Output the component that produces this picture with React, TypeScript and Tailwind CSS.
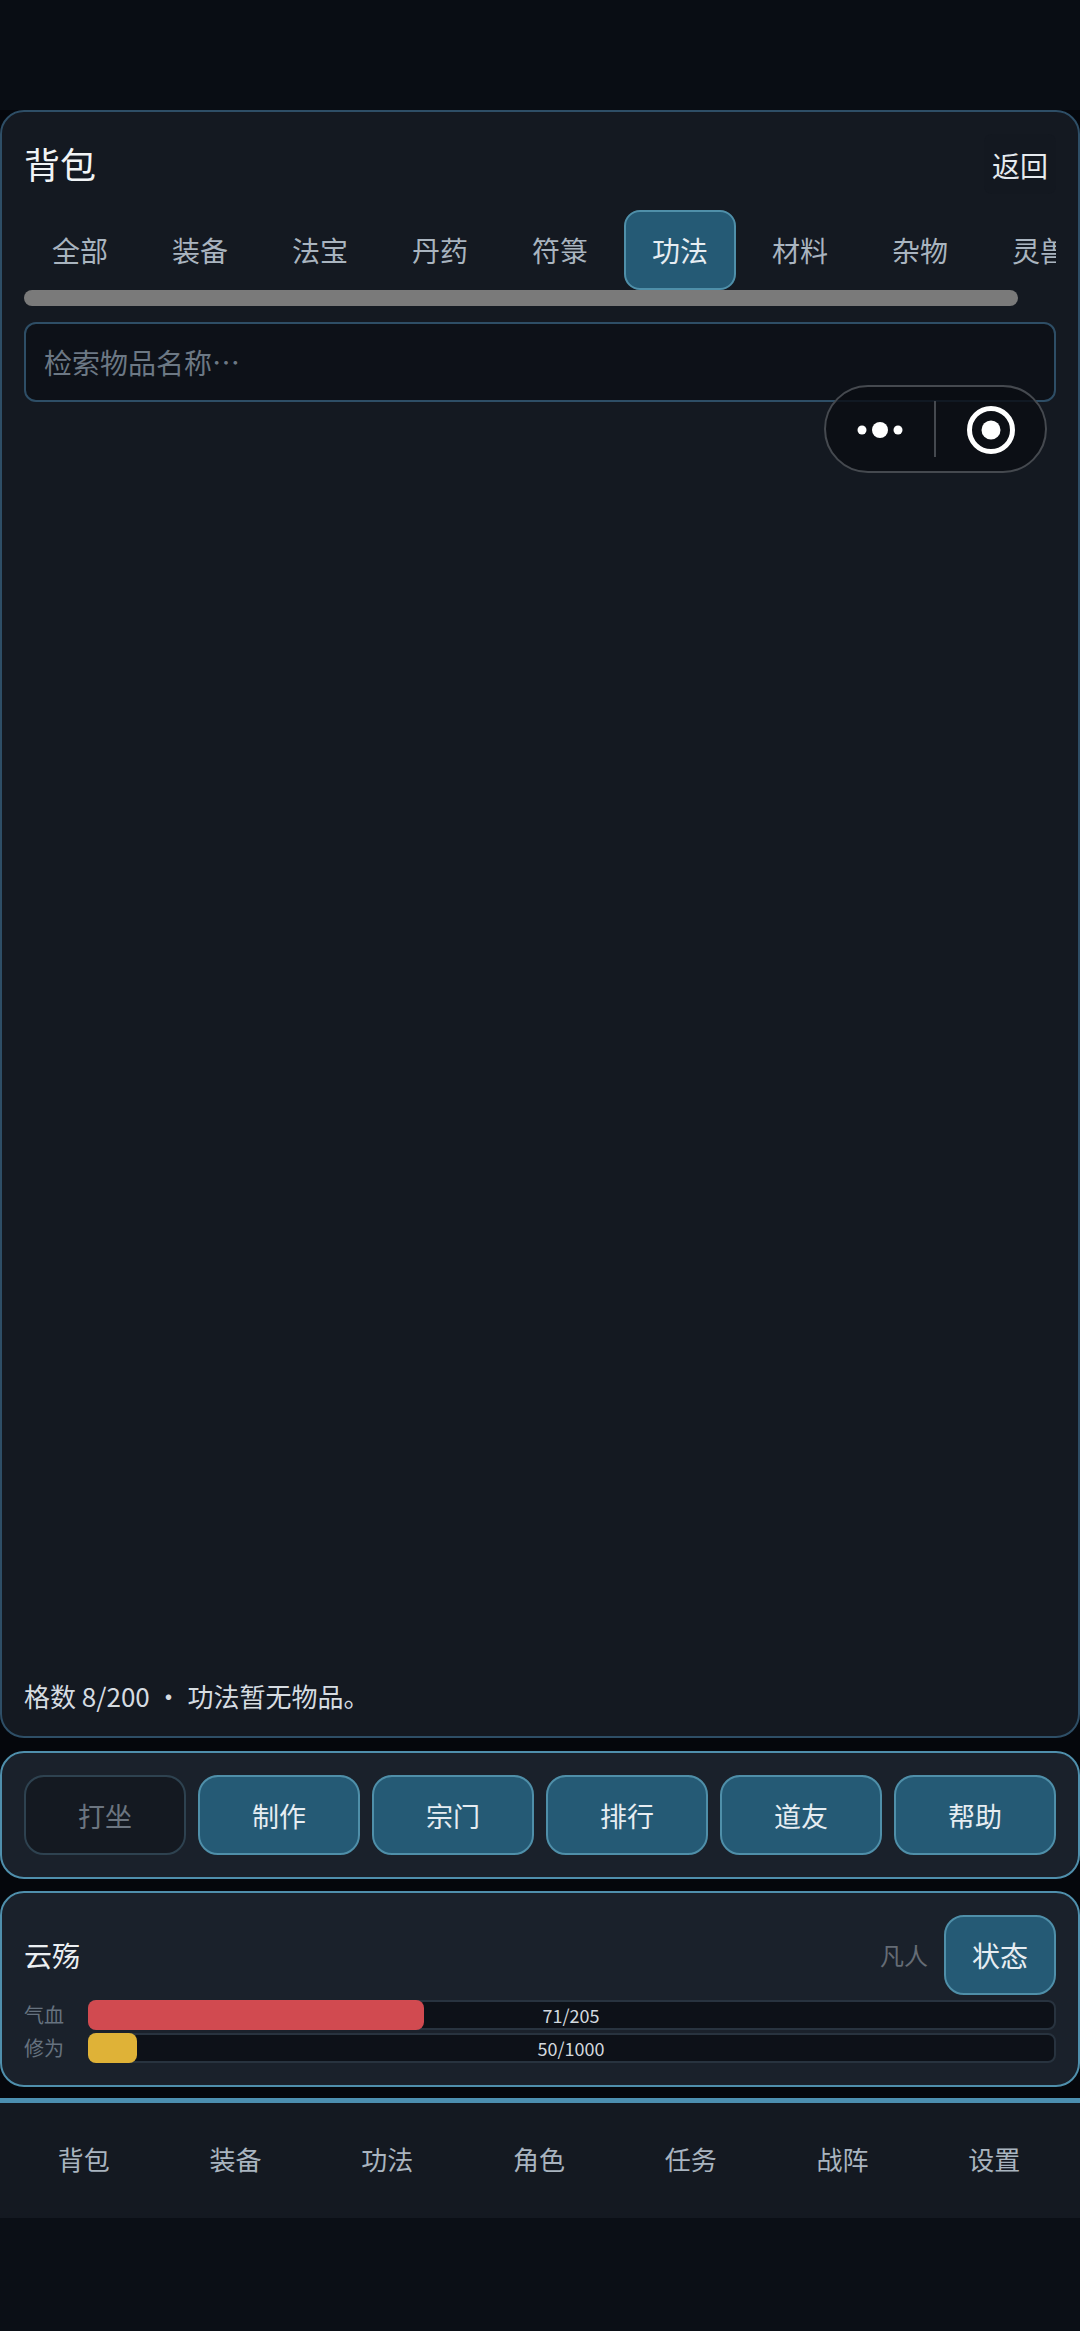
const TABS = ["全部", "装备", "法宝", "丹药", "符箓", "功法", "材料", "杂物", "灵兽"];
const ACTIONS = ["制作", "宗门", "排行", "道友", "帮助"];
const NAV = ["背包", "装备", "功法", "角色", "任务", "战阵", "设置"];

function StatBar({ label, value, max, color }: { label: string; value: number; max: number; color: string }) {
  return (
    <div className="flex items-center h-[30px]">
      <span className="w-[64px] shrink-0 text-[20px] leading-none text-[#66727f]">{label}</span>
      <div className="relative flex-1 h-[30px] rounded-[8px] border-2 border-[#28333f] bg-[#0d1118]">
        <div
          className={`absolute -left-[2px] -top-[2px] -bottom-[2px] rounded-[8px] ${color}`}
          style={{ width: `${(value / max) * 968 + 1}px` }}
        />
        <span className="absolute inset-0 flex items-center justify-center pr-[2px] text-[18px] leading-none text-[#d3d9df]">
          {value}/{max}
        </span>
      </div>
    </div>
  );
}

export default function App() {
  return (
    <div className="relative flex h-[2331px] w-[1080px] flex-col overflow-hidden bg-[#05070c] pt-[110px] font-['Noto_Sans_CJK_SC',sans-serif]">
      {/* status bar strip */}
      <div className="absolute inset-x-0 top-0 h-[110px] bg-[#090d14]" />

      {/* Inventory panel */}
      <section className="relative flex h-[1628px] flex-col rounded-[24px] border-2 border-[#2e4e66] bg-[#141921] px-[22px] pt-[22px]">
        <div className="flex h-[60px] items-center justify-between">
          <h1 className="pb-[2px] text-[36px] leading-none text-[#f1f4f6]">背包</h1>
          <button className="flex h-[60px] w-[72px] items-center justify-center rounded-[8px] bg-[#131820] pt-[2px] text-[28px] leading-none text-[#e6eaee]">
            返回
          </button>
        </div>

        {/* Category tabs */}
        <div className="mt-[16px] flex gap-2 overflow-hidden">
          {TABS.map((t) =>
            t === "功法" ? (
              <div
                key={t}
                className="flex h-[80px] w-[112px] shrink-0 items-center justify-center rounded-[16px] border-2 border-[#4f8fa9] bg-[#255a75] text-[28px] leading-none text-[#e6edf2]"
              >
                {t}
              </div>
            ) : (
              <div
                key={t}
                className="flex h-[80px] w-[112px] shrink-0 items-center justify-center text-[28px] leading-none text-[#a9b4bf]"
              >
                {t}
              </div>
            )
          )}
        </div>
        <div className="h-[16px] w-[994px] rounded-full bg-[#7a7a7a]" />

        {/* Search */}
        <input
          readOnly
          placeholder="检索物品名称…"
          className="mt-[16px] h-[80px] w-full rounded-[12px] border-2 border-[#2e4e66] bg-[#0d1118] px-[18px] text-[28px] text-[#d3d9df] outline-none placeholder:text-[#6c7884]"
        />

        <div className="flex-1" />
        <p className="mb-[20px] text-[26px] leading-[40px] text-[#d6dce1]">格数 8/200 ・ 功法暂无物品。</p>
      </section>

      {/* Actions */}
      <section className="mt-[13px] flex gap-3 rounded-[24px] border-2 border-[#4f8fac] bg-[#1a212b] p-[22px]">
        <button className="h-[80px] flex-1 rounded-[20px] border-2 border-[#2e4250] bg-[#141921] text-[27px] leading-none text-[#6c7580]">
          打坐
        </button>
        {ACTIONS.map((a) => (
          <button
            key={a}
            className="h-[80px] flex-1 rounded-[20px] border-2 border-[#4f8fa9] bg-[#255a75] text-[27px] leading-none text-[#e6edf2]"
          >
            {a}
          </button>
        ))}
      </section>

      {/* Character status */}
      <section className="mt-[12px] h-[196px] rounded-[24px] border-2 border-[#4f8fac] bg-[#1a212b] px-[22px] pt-[22px]">
        <div className="flex h-[80px] items-center">
          <span className="text-[28px] leading-none text-[#eceff2]">云殇</span>
          <span className="ml-auto mr-[16px] text-[24px] leading-none text-[#656c75]">凡人</span>
          <button className="h-[80px] w-[112px] rounded-[20px] border-2 border-[#4f8fa9] bg-[#255a75] text-[28px] leading-none text-[#e6edf2]">
            状态
          </button>
        </div>
        <div className="mt-[5px] flex flex-col gap-[3px]">
          <StatBar label="气血" value={71} max={205} color="bg-[#d14a50]" />
          <StatBar label="修为" value={50} max={1000} color="bg-[#dfb237]" />
        </div>
      </section>

      {/* Bottom nav */}
      <nav className="mt-[11px] flex h-[120px] items-center border-t-[5px] border-[#4c8fb0] bg-[#141921] pl-[8px] pr-[10px] pb-[3px]">
        {NAV.map((n) => (
          <div key={n} className="flex-1 text-center text-[26px] leading-none text-[#a9b4bf]">
            {n}
          </div>
        ))}
      </nav>
      <div className="flex-1 bg-[#0b0f16]" />

      {/* Mini-program capsule */}
      <div className="absolute left-[824px] top-[385px] flex h-[88px] w-[223px] items-center rounded-full border-2 border-[#45494f] bg-[#0a0d13]/80">
        <div className="flex h-full w-[108px] items-center justify-center">
          <svg width="52" height="18" viewBox="0 0 52 18" fill="#fff" className="translate-y-[1px]">
            <circle cx="8" cy="9" r="4.5" />
            <circle cx="26" cy="9" r="8" />
            <circle cx="44" cy="9" r="4.5" />
          </svg>
        </div>
        <div className="h-[56px] w-[2px] bg-[#45494f]" />
        <div className="flex flex-1 items-center justify-center">
          <svg width="50" height="50" viewBox="0 0 50 50" fill="none" className="translate-y-[1px]">
            <circle cx="25" cy="25" r="21.5" stroke="#fff" strokeWidth="5" />
            <circle cx="25" cy="25" r="9.5" fill="#fff" />
          </svg>
        </div>
      </div>
    </div>
  );
}
